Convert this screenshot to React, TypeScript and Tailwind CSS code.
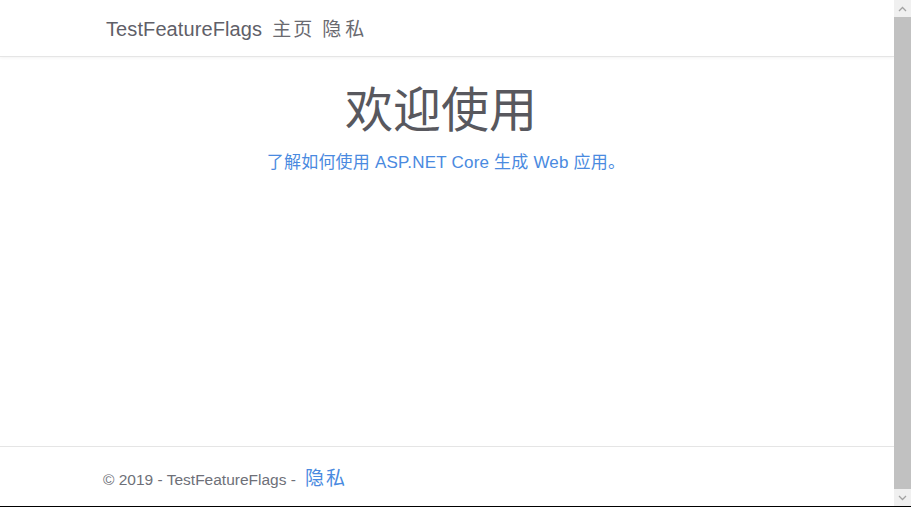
import React from 'react';

const latin = { fontFamily: '"Liberation Sans", "Noto Sans CJK SC", sans-serif' };

function ScrollBar() {
  return (
    <div className="w-[17px] flex flex-col bg-[#f0f0f0]">
      <div className="h-[17px] flex items-center justify-center">
        <svg width="9" height="6" viewBox="0 0 9 6">
          <path d="M1 5 L4.5 1.5 L8 5" fill="none" stroke="#a3a3a3" strokeWidth="1.3" />
        </svg>
      </div>
      <div className="flex-1 bg-[#c1c1c1]" />
      <div className="h-[17px] flex items-center justify-center">
        <svg width="9" height="6" viewBox="0 0 9 6">
          <path d="M1 1 L4.5 4.5 L8 1" fill="none" stroke="#a3a3a3" strokeWidth="1.3" />
        </svg>
      </div>
    </div>
  );
}

export default function App() {
  return (
    <div className="h-[507px] w-[911px] flex bg-white border-b border-black overflow-hidden" style={latin}>
      <div className="flex-1 flex flex-col">
        {/* header */}
        <header className="h-[57px] border-b border-[#e5e5e5] shadow-[0_1px_3px_rgba(0,0,0,0.05)] flex items-center pt-[3px]">
          <nav className="pl-[106px] flex items-baseline text-[#5f6068]">
            <span className="text-[20px] tracking-[0.1px]">TestFeatureFlags</span>
            <span className="ml-[10px] text-[19px] tracking-[2px] text-[#6a6a70]">主页</span>
            <span className="ml-[8px] text-[19px] tracking-[4px] text-[#6a6a70]">隐私</span>
          </nav>
        </header>

        {/* main */}
        <main className="flex-1 flex flex-col items-center pt-[25px]">
          <h1 className="text-[48px] leading-[58px] font-normal text-[#58585e] pr-[12px]">欢迎使用</h1>
          <p className="mt-[10px] text-[17px] tracking-[0.2px] text-[#4a8ae0] pr-[2px]">
            了解如何使用 <a className="text-[#4a8ae0]">ASP.NET Core 生成 Web 应用</a>。
          </p>
        </main>

        {/* footer */}
        <footer className="h-[60px] border-t border-[#e5e5e5] flex items-center pl-[103px] pt-[6px]">
          <span className="text-[15.5px] text-[#6e7078]">© 2019 - TestFeatureFlags - </span>
          <a className="ml-[9px] text-[19px] tracking-[2px] text-[#4a8ae0]">隐私</a>
        </footer>
      </div>
      <ScrollBar />
    </div>
  );
}
